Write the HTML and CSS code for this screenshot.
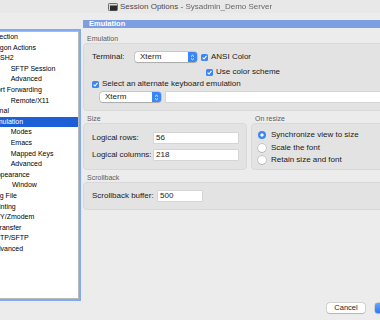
FILE: index.html
```html
<!DOCTYPE html>
<html lang="en">
<head>
    <meta charset="UTF-8">
    <title>Session Options</title>
    <link rel="stylesheet" href="styles.css">
</head>
<body>
<div class="window">
    <div class="titlebar">
        <svg class="doc-icon" width="10" height="8" viewBox="0 0 10 8">
            <rect x="0.5" y="0.5" width="9" height="7" rx="0.8" fill="#d9d9d9" stroke="#6b6b6b"/>
            <rect x="2" y="2.5" width="7" height="5" fill="#2b2b2b"/>
        </svg>
        <span class="title">Session Options - </span>
        <span class="title blurred">Sysadmin_Demo Server</span>
    </div>

    <div class="main">
        <div class="tree">
            <ul class="rows">
                <li class="d0">Connection</li>
                <li class="d1">Logon Actions</li>
                <li class="d1 ssh">SSH2</li>
                <li class="d2">SFTP Session</li>
                <li class="d2">Advanced</li>
                <li class="d1">Port Forwarding</li>
                <li class="d2">Remote/X11</li>
                <li class="d0">Terminal</li>
                <li class="d1 selected">Emulation</li>
                <li class="d2">Modes</li>
                <li class="d2">Emacs</li>
                <li class="d2">Mapped Keys</li>
                <li class="d2">Advanced</li>
                <li class="d1">Appearance</li>
                <li class="d2 win">Window</li>
                <li class="d1">Log File</li>
                <li class="d1">Printing</li>
                <li class="d1 xyz">X/Y/Zmodem</li>
                <li class="d0">File Transfer</li>
                <li class="d1 ftp">FTP/SFTP</li>
                <li class="d1">Advanced</li>
            </ul>
        </div>

        <div class="pane">
            <div class="pane-head">Emulation</div>

            <div class="group-label">Emulation</div>
            <div class="group emu">
                <div class="emu-row first">
                    <span class="label term-label">Terminal:</span>
                    <div class="select wide">
                        <span>Xterm</span>
                        <span class="stepper"><svg width="5" height="7" viewBox="0 0 5 7"><path d="M1 2.6 L2.5 1.2 L4 2.6 M1 4.4 L2.5 5.8 L4 4.4" fill="none" stroke="#fff" stroke-width="0.9"/></svg></span>
                    </div>
                    <span class="check"><svg width="7" height="7" viewBox="0 0 7 7"><path d="M1.6 3.6 L3 5 L5.5 1.8" fill="none" stroke="#fff" stroke-width="1.1"/></svg></span>
                    <span class="label">ANSI Color</span>
                </div>
                <div class="emu-row scheme">
                    <span class="check"><svg width="7" height="7" viewBox="0 0 7 7"><path d="M1.6 3.6 L3 5 L5.5 1.8" fill="none" stroke="#fff" stroke-width="1.1"/></svg></span>
                    <span class="label">Use color scheme</span>
                </div>
                <div class="emu-row alt">
                    <span class="check"><svg width="7" height="7" viewBox="0 0 7 7"><path d="M1.6 3.6 L3 5 L5.5 1.8" fill="none" stroke="#fff" stroke-width="1.1"/></svg></span>
                    <span class="label">Select an alternate keyboard emulation</span>
                </div>
                <div class="emu-row kbd">
                    <div class="select">
                        <span>Xterm</span>
                        <span class="stepper"><svg width="5" height="7" viewBox="0 0 5 7"><path d="M1 2.6 L2.5 1.2 L4 2.6 M1 4.4 L2.5 5.8 L4 4.4" fill="none" stroke="#fff" stroke-width="0.9"/></svg></span>
                    </div>
                    <div class="field grow"></div>
                </div>
            </div>

            <div class="split">
                <div class="col size-col">
                    <div class="group-label">Size</div>
                    <div class="group size">
                        <div class="form-row">
                            <span class="label size-label">Logical rows:</span>
                            <div class="field size-field">56</div>
                        </div>
                        <div class="form-row">
                            <span class="label size-label">Logical columns:</span>
                            <div class="field size-field">218</div>
                        </div>
                    </div>
                </div>
                <div class="col resize-col">
                    <div class="group-label">On resize</div>
                    <div class="group resize">
                        <div class="radio-row"><span class="radio on"></span><span class="label">Synchronize view to size</span></div>
                        <div class="radio-row"><span class="radio"></span><span class="label">Scale the font</span></div>
                        <div class="radio-row"><span class="radio"></span><span class="label">Retain size and font</span></div>
                    </div>
                </div>
            </div>

            <div class="group-label">Scrollback</div>
            <div class="group scroll">
                <div class="form-row">
                    <span class="label scroll-label">Scrollback buffer:</span>
                    <div class="field scroll-field">500</div>
                </div>
            </div>

            <div class="buttons">
                <button class="btn">Cancel</button>
                <button class="btn default">OK</button>
            </div>
        </div>
    </div>
</div>
</body>
</html>
```

FILE: styles.css
```css
:root {
    --window: #ececec;
    --box: #e3e3e3;
    --box-border: #d9d9d9;
    --text: #1a1a1a;
    --muted: #5c5c5c;
    --accent: #3b86f7;
    --head-blue: #7d9fe1;
    --select-blue: #1d5fd7;
    --focus: #82aaf0;
}

* {
    box-sizing: border-box;
    margin: 0;
    padding: 0;
}

body {
    width: 380px;
    height: 320px;
    overflow: hidden;
    background-color: var(--window);
    font-family: "Liberation Sans", Arial, sans-serif;
    color: var(--text);
}

.window {
    width: 380px;
    height: 320px;
    overflow: hidden;
    display: flex;
    flex-direction: column;
}

.titlebar {
    height: 13px;
    display: flex;
    align-items: center;
    padding-left: 108px;
    background-color: #e8e8e8;
    font-size: 8px;
    color: #4a4a4a;
    white-space: pre;
}

.doc-icon {
    margin-right: 2px;
}

.title.blurred {
    filter: blur(0.7px);
    color: #666;
}

.main {
    flex: 1;
    display: flex;
    min-height: 0;
}

/* Category tree */
.tree {
    width: 83px;
    height: 268px;
    margin-top: 18px;
    margin-left: -4px;
    flex-shrink: 0;
    background-color: #fff;
    border: 1px solid #b9b9b9;
    box-shadow: 0 0 0 2px var(--focus);
    overflow: hidden;
}

.rows {
    list-style: none;
    font-size: 7px;
    line-height: 10.6px;
    white-space: nowrap;
}

.rows li {
    height: 10.6px;
    color: #000;
}

.rows .d0 { text-indent: -14.5px; }
.rows .d1 { text-indent: -5px; }
.rows .d2 { text-indent: 13.7px; }
.rows .ssh { text-indent: -1.7px; }
.rows .xyz { text-indent: -3.6px; }
.rows .ftp { text-indent: -1.3px; }
.rows .win { text-indent: 15px; }

.rows .selected {
    background-color: var(--select-blue);
    color: #fff;
}

/* Settings pane */
.pane {
    width: 340px;
    flex-shrink: 0;
    margin-left: 4px;
    display: flex;
    flex-direction: column;
    font-size: 8px;
}

.pane-head {
    margin-top: 7px;
    height: 8px;
    line-height: 8px;
    padding-left: 6px;
    background-color: var(--head-blue);
    color: #fff;
    font-weight: 700;
    font-size: 7.5px;
}

.group-label {
    height: 9px;
    line-height: 9px;
    margin-top: 3px;
    padding-left: 4px;
    font-size: 7px;
    color: var(--muted);
}

.pane-head + .group-label {
    margin-top: 6px;
}

.group {
    background-color: var(--box);
    border: 1px solid var(--box-border);
    border-radius: 4px;
}

.label {
    white-space: nowrap;
    line-height: 8px;
}

/* Emulation box */
.emu {
    padding: 8px 0 8px 8px;
    display: flex;
    flex-direction: column;
}

.emu-row {
    display: flex;
    align-items: center;
    gap: 3px;
}

.emu-row.scheme {
    height: 8px;
    margin-top: 6px;
    padding-left: 114px;
}

.emu-row.alt {
    height: 8px;
    margin-top: 4px;
}

.emu-row.kbd {
    margin-top: 4px;
    padding-left: 8px;
    gap: 5px;
}

.term-label {
    width: 40px;
}

.select {
    width: 61px;
    height: 10px;
    display: flex;
    align-items: center;
    justify-content: space-between;
    padding-left: 5px;
    background-color: #fff;
    border-radius: 2.5px;
    box-shadow: 0 0 0 0.5px rgba(0, 0, 0, 0.22), 0 0.5px 1px rgba(0, 0, 0, 0.15);
    line-height: 8px;
}

.select.wide {
    width: 62px;
    margin-right: 1px;
}

.stepper {
    width: 9px;
    height: 10px;
    display: flex;
    align-items: center;
    justify-content: center;
    background-color: var(--accent);
    border-radius: 0 2.5px 2.5px 0;
}

.check {
    width: 7px;
    height: 7px;
    flex-shrink: 0;
    display: flex;
    background-color: var(--accent);
    border-radius: 1.5px;
}

.field {
    height: 10px;
    line-height: 10px;
    padding-left: 2px;
    background-color: #fff;
    box-shadow: 0 0 0 0.5px rgba(0, 0, 0, 0.12);
}

.grow {
    flex: 1;
}

/* Size / On resize */
.split {
    display: flex;
    gap: 4px;
}

.col {
    display: flex;
    flex-direction: column;
}

.size-col {
    width: 164px;
}

.resize-col {
    flex: 1;
}

.col .group {
    flex: 1;
}

.size {
    padding: 9px 8px 9px 8px;
    display: flex;
    flex-direction: column;
    gap: 7px;
}

.form-row {
    display: flex;
    align-items: center;
    height: 10px;
}

.size-label {
    width: 62px;
}

.size-field {
    width: 84px;
}

.resize {
    padding: 7px 0 0 6px;
    display: flex;
    flex-direction: column;
    gap: 4.5px;
}

.radio-row {
    display: flex;
    align-items: center;
    gap: 5px;
    height: 8px;
}

.radio {
    width: 8px;
    height: 8px;
    border-radius: 50%;
    background-color: #fff;
    box-shadow: 0 0 0 0.5px rgba(0, 0, 0, 0.25), 0 0.5px 1px rgba(0, 0, 0, 0.15);
}

.radio.on {
    background: radial-gradient(circle, #fff 0 1.4px, var(--accent) 1.8px);
    box-shadow: none;
}

/* Scrollback */
.scroll {
    padding: 8px 8px;
}

.scroll-label {
    width: 66px;
}

.scroll-field {
    width: 44px;
}

/* Dialog buttons */
.buttons {
    margin-top: auto;
    padding: 0 8px 7px 0;
    display: flex;
    justify-content: flex-end;
    gap: 10px;
}

.btn {
    width: 38px;
    height: 10px;
    border: none;
    border-radius: 2.5px;
    background-color: #fff;
    box-shadow: 0 0 0 0.5px rgba(0, 0, 0, 0.2), 0 0.5px 1px rgba(0, 0, 0, 0.15);
    font-family: "Liberation Sans", Arial, sans-serif;
    font-size: 7.5px;
    line-height: 10px;
    color: #222;
}

.btn.default {
    width: 40px;
    background: linear-gradient(#69a5fa, #2a78f5);
    color: #fff;
}
```
